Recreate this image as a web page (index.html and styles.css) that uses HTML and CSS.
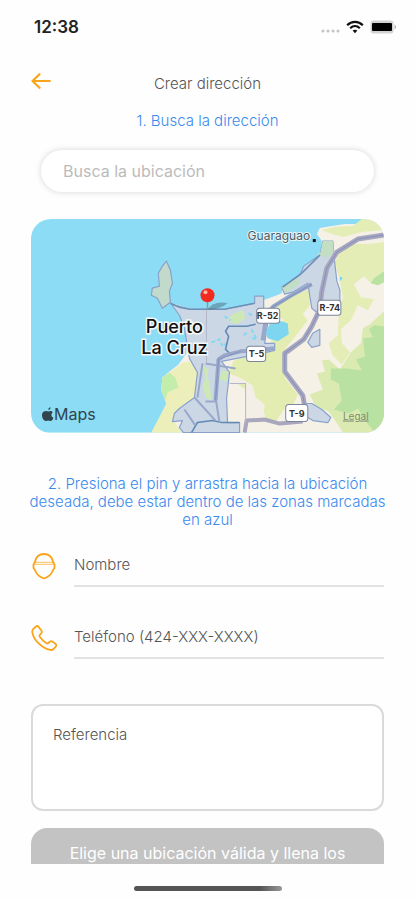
FILE: index.html
```
<!DOCTYPE html>
<html lang="es">
<head>
    <meta charset="UTF-8">
    <meta name="viewport" content="width=device-width, initial-scale=1.0">
    <title>Crear dirección</title>
    <link rel="stylesheet" href="styles.css">
</head>
<body>
    <div class="status-bar">
        <span class="time">12:38</span>
        <div class="status-icons">
            <svg width="19" height="4" viewBox="0 0 19 4" fill="#c4c4c4">
                <circle cx="2" cy="2" r="1.5"/><circle cx="7" cy="2" r="1.5"/><circle cx="12" cy="2" r="1.5"/><circle cx="17" cy="2" r="1.5"/>
            </svg>
            <svg width="18" height="14" viewBox="0 0 18 14" fill="none" stroke="#111" stroke-width="2.2">
                <path d="M1.2 5.2C5.6 0.7 12.4 0.7 16.8 5.2"/>
                <path d="M4.2 8.2C7 5.5 11 5.5 13.8 8.2"/>
                <path d="M9 13.2L6.6 10.6C8 9.4 10 9.4 11.4 10.6Z" fill="#111" stroke="none"/>
            </svg>
            <svg width="27" height="14" viewBox="0 0 27 14">
                <rect x="0.5" y="0.5" width="23" height="13" rx="3" fill="#d2d2d2"/>
                <rect x="2" y="3" width="20" height="8" rx="1" fill="#000"/>
                <path d="M24.5 4.5C26.6 5.3 26.6 8.7 24.5 9.5Z" fill="#bbb"/>
            </svg>
        </div>
    </div>

    <main class="screen">
        <header class="header">
            <button class="back" type="button" aria-label="Volver">
                <svg width="20" height="16" viewBox="0 0 20 16" fill="none" stroke="#faa41a" stroke-width="2.2" stroke-linecap="round" stroke-linejoin="round">
                    <path d="M18.8 8H1.5M8.5 1.2L1.5 8l7 6.8"/>
                </svg>
            </button>
            <h1>Crear dirección</h1>
        </header>

        <p class="hint">1. Busca la dirección</p>
        <input class="search" type="text" placeholder="Busca la ubicación" aria-label="Busca la ubicación">

        <div class="map">
            <svg viewBox="0 0 352 213" preserveAspectRatio="xMidYMid slice">
                <!-- sea and mainland -->
                <rect width="352" height="213" fill="#8bdcf4"/>
                <path d="M352 0H333L325 5L313 5L300 7L288 9L285 15L290 22L289 31L285 38L279 48L270 54L260 61L251 68L250 74L240 78L231 81L223 84L210 87L193 90L173 91L158 89L140 84L148 96L153 109L155 124L155 134L147 145L138 152L131 158L130 171L135 184L130 196L120 213H352Z" fill="#f5f1e6"/>

                <!-- fields and woods -->
                <path d="M330 0L321 7L303 8L290 11L300 15L311 18L330 13L352 11V0ZM310 29L323 25L336 25L352 23V55L340 65L332 57L322 65L329 78L342 80L336 91L326 86L319 101L309 110L310 124L318 133L310 145L301 136L297 124L306 116L307 91L311 78L307 58L303 43Z" fill="#e5edb6"/>
                <path d="M352 92L338 105L331 109L329 124L319 133L308 150L297 140L290 141L293 152L285 154L291 170L278 175L284 187L297 192L306 205L311 213H352Z" fill="#dbeab0"/>
                <path d="M352 107L342 106L337 110L341 118L331 119L333 137L324 140L330 151L315 149L299 149L299 160L307 164L310 181L302 190L317 194L326 189L336 205L343 213H352ZM352 52L342 59L339 64L346 66L352 63Z" fill="#b9e2a2"/>
                <path d="M245 85L281 68L280 75L278 86L271 95L276 101L263 118L253 130L253 158L266 175L262 184L252 190L245 201L235 201L231 190L224 192L219 174L204 163L198 152L202 141L226 134L238 128L241 115L252 100L240 96Z" fill="#e3edb2"/>
                <path d="M152 143L160 142L166 153L163 178L148 189L141 199L150 213H120L135 184L130 171L131 158Z" fill="#ecefb9"/>
                <path d="M198 164H214V203H231L233 185L224 178L221 166L208 158L200 155Z" fill="#f4efe6"/>
                <path d="M138 153L144 158L147 168L136 173L134 181L130 171L131 158Z" fill="#c3edab"/>

                <!-- delivery zones -->
                <g fill="#ccd7e6" stroke="#8aa2cb" stroke-width="1.2" stroke-linejoin="round">
                    <path d="M135 42L139 51L141 64L138 72L139 83L131 89L126 79L120 76L121 69L128 67L127 54L131 47Z" fill="#c2dacc"/>
                    <path d="M140 85L160 90L193 90L223 84V77H232V92L236 104L233 124H243V131L226 135L190 142L198 153L195 179L196 203H208V213H152L148 208L151 201L141 202L143 194L148 189L163 178L166 153L158 139L153 109L148 96Z"/>
                    <path d="M291 22H301L302 36L305 62L308 71V82L286 94L280 89L276 64L261 73L253 75L250 68L268 56L272 47L288 36Z"/>
                    <path d="M276 123L281 114L288 110V126L280 128Z"/>
                    <path d="M271 184L280 184L290 190L299 198L296 203L281 201L273 196Z"/>
                </g>
                <path d="M291 22H301L302 34L294 39L288 36ZM250 68L268 58L267 65L254 74Z" fill="#c2dfc3"/>
                <path d="M171 146L177 150L176 157L178 163L180 181L174 178L171 166L174 158ZM190 151L197 152L195 162L188 160ZM201 95L211 91L214 99L205 105L196 101Z" fill="#cde8b5"/>

                <!-- small water -->
                <path d="M239 103L243 96L246 101L256 104L257 115L246 122L236 119L234 113ZM308 57L311 59L308 62Z" fill="#7dd6f0"/>
                <path d="M180 123L188 120L191 127L195 124M193 97L199 101M217 94L222 97M220 110L225 120L218 118M212 116L216 113" fill="none" stroke="#86d8f0" stroke-width="2" stroke-dasharray="4 2"/>

                <!-- coast line and zone edges -->
                <path d="M139 84L148 88L158 90H193L223 84M288 36L270 54L251 68" fill="none" stroke="#6d90b6" stroke-width="1.6"/>
                <path d="M224 105L215 107H197L194 112L197 117L194 130L199 135M160 213L166 203L181 201L190 203H208" fill="none" stroke="#6289b4" stroke-width="1.6"/>

                <!-- roads -->
                <g fill="none" stroke="#a9a7be" stroke-linejoin="round">
                    <path d="M352 16L326 20L305 33L295 49L290 72L288 90L280 107L272 120L253 134L253 152L271 176L273 187" stroke-width="5"/>
                    <path d="M213 213L215 201L233 200L248 204L271 202" stroke-width="4"/>
                </g>
                <g fill="none" stroke="#99a7ca" stroke-linejoin="round">
                    <path d="M280 65L258 77L242 87L235 94L231 121M184 181L187 140L193 136L209 132L226 131L243 129" stroke-width="4"/>
                    <path d="M171 144L166 178M174 144L204 149M163 178L184 201M184 178L188 203M153 190L164 206M174 182L184 182" stroke-width="2"/>
                </g>
                <path d="M352 16L326 20L305 33L295 49L290 72L288 90L280 107L272 120L253 134L253 152L271 176L273 187M280 65L242 87L235 94M184 181L187 140L209 132" fill="none" stroke="#8093bd" stroke-width="1"/>
                <path d="M175 91V144M198 164H214V203" fill="none" stroke="#b4b7c9" stroke-width="1"/>

                <!-- road shields -->
                <g class="shield">
                    <rect x="225" y="89" width="23" height="15" rx="3"/>
                    <rect x="286" y="81" width="23" height="15" rx="3"/>
                    <rect x="215" y="127" width="19" height="15" rx="3"/>
                    <rect x="254" y="185" width="22" height="17" rx="3"/>
                    <text x="236" y="100">R-52</text>
                    <text x="298" y="92">R-74</text>
                    <text x="225" y="138">T-5</text>
                    <text x="265" y="197">T-9</text>
                </g>

                <!-- places -->
                <text class="village" x="216" y="21">Guaraguao</text>
                <rect x="281" y="20" width="3" height="3" fill="#111"/>
                <text class="city" x="143" y="114">Puerto</text>
                <text class="city" x="143" y="135">La Cruz</text>

                <!-- pin -->
                <path d="M176 90Q183 81 196 84Q187 91 176 90Z" fill="#45616d" fill-opacity="0.45"/>
                <path d="M176 82V90" stroke="#8e999d" stroke-width="1.5"/>
                <circle cx="176" cy="76" r="7" fill="#f32a20"/>
                <circle cx="174" cy="73" r="2" fill="#ffb5a7"/>

                <!-- maps mark -->
                <path d="M17.5 190.5C18.8 190.2 19.6 188.9 19.4 187.7C18 187.9 17 189.2 17.5 190.5ZM20.4 195.4C20.4 194 21.2 193.1 21.8 192.8C20.8 191.3 19.1 191.2 17.4 192C15.1 190.8 12.3 191.6 11.3 193.8C10 197.3 12.8 202 15.1 201.5C16.7 200.7 17.6 200.8 19.1 201.5C20.7 201.7 22 199.7 22.4 198.2C21.1 197.6 20.4 196.7 20.4 195.4Z" fill="#31444d"/>
                <text class="brand" x="23" y="200">Maps</text>
                <text class="legal" x="311" y="200">Legal</text>
            </svg>
        </div>

        <p class="hint hint-pin">2. Presiona el pin y arrastra hacia la ubicación deseada, debe estar dentro de las zonas marcadas en azul</p>

        <div class="field">
            <label for="nombre" aria-label="Nombre">
                <svg width="26" height="28" viewBox="0 0 26 28" fill="none" stroke="#faa41a" stroke-width="1.8" stroke-linejoin="round">
                    <path d="M4 9.8C5 4.6 8 2 13 2S21 4.6 22 9.8L23.5 12.5V16L21.8 18.5C20.5 22.5 17 25 13 26.5C9 25 5.5 22.5 4.2 18.5L2.5 16V12.5Z"/>
                    <path d="M3.5 10.3H22.5M3.5 12.3H22.5" stroke-width="1" stroke-opacity="0.7"/>
                </svg>
            </label>
            <input id="nombre" type="text" placeholder="Nombre">
        </div>

        <div class="field">
            <label for="telefono" aria-label="Teléfono">
                <svg width="26" height="28" viewBox="0 0 26 28" fill="none" stroke="#faa41a" stroke-width="1.8" stroke-linejoin="round">
                    <path d="M2.2 5.2L5 2.5Q6.5 1.4 7.7 2.9L10.5 6.8Q11.3 8.2 10.2 9.4L8.6 11.1Q8.3 12 9 13.1Q11.5 16.8 15.5 19.3Q16.5 19.8 17.4 19L18.8 17.7Q20 16.8 21.3 17.6L24.7 20.1Q26 21.4 24.8 22.7L22.6 25Q21.2 26.3 19.3 25.9C11.5 24.5 2.8 16.5 1.3 8.3Q1 6.5 2.2 5.2Z"/>
                </svg>
            </label>
            <input id="telefono" type="tel" placeholder="Teléfono (424-XXX-XXXX)">
        </div>

        <textarea class="reference" placeholder="Referencia" aria-label="Referencia"></textarea>
        <button class="submit" type="submit">Elige una ubicación válida y llena los</button>
    </main>

    <div class="home"><div class="home-bar"></div></div>
</body>
</html>
```
FILE: styles.css
```
* {
    box-sizing: border-box;
}
body {
    display: flex;
    flex-direction: column;
    height: 100vh;
    margin: 0;
    background-color: #fefefe;
    font-family: Inter, "Liberation Sans", sans-serif;
    font-size: 15px;
    font-weight: 300;
    color: #555;
}
button, input, textarea {
    font: inherit;
}
.status-bar {
    display: flex;
    flex: none;
    align-items: center;
    justify-content: space-between;
    height: 54px;
    padding: 0 18px 0 34px;
}
.time {
    font-size: 17px;
    font-weight: 600;
    color: #222;
}
.status-icons {
    display: flex;
    align-items: center;
    gap: 6px;
}
.status-icons svg:first-child {
    margin-top: 8px;
}
.screen {
    display: flex;
    flex: 1;
    flex-direction: column;
    min-height: 0;
    padding: 0 31px;
    overflow: hidden;
}
.screen > * {
    flex: none;
}
.header {
    display: grid;
    grid-template-columns: 24px 1fr 24px;
    align-items: center;
    height: 56px;
    padding-top: 3px;
}
.back {
    display: flex;
    padding: 0 0 6px;
    border: none;
    background: none;
    cursor: pointer;
}
h1 {
    margin: 0;
    font-size: 15px;
    font-weight: 300;
    line-height: 18px;
    text-align: center;
}
.hint {
    margin: 2px 0 20px;
    font-size: 15px;
    line-height: 18px;
    text-align: center;
    color: #3a8aee;
}
.hint-pin {
    margin: 42px -4px 16px;
}
.search {
    height: 42px;
    margin: 0 10px 27px;
    padding: 0 22px;
    border: none;
    border-radius: 21px;
    background-color: #fff;
    box-shadow: 0 0 6px rgba(0, 0, 0, 0.16);
    font-size: 16px;
    font-weight: 400;
}
.search::placeholder {
    color: #bbb;
}
.map {
    border-radius: 20px;
    overflow: hidden;
}
.map svg {
    display: block;
    width: 100%;
}
.shield rect {
    fill: #fff;
    stroke: #7c8599;
    stroke-width: 1px;
}
.shield text {
    font-size: 9px;
    font-weight: 700;
    text-anchor: middle;
    fill: #333;
}
.village {
    font-size: 12px;
    font-weight: 400;
    fill: #4c5c66;
    stroke: #e3f5fa;
    stroke-width: 2px;
    paint-order: stroke;
}
.city {
    font-size: 18px;
    font-weight: 500;
    text-anchor: middle;
    fill: #111;
    stroke: #f4f8f8;
    stroke-width: 3px;
    paint-order: stroke;
}
.brand {
    font-size: 16px;
    font-weight: 400;
    fill: #31444d;
}
.legal {
    font-size: 10px;
    font-weight: 400;
    fill: #7d8c75;
    text-decoration: underline;
}
.field {
    display: flex;
    align-items: center;
    gap: 17px;
    height: 42px;
    margin-bottom: 30px;
}
.field label {
    display: flex;
}
.field input {
    flex: 1;
    min-width: 0;
    height: 42px;
    padding: 0;
    border: none;
    border-bottom: 2px solid #e2e2e2;
    background: none;
    font-size: 15px;
}
.field input::placeholder,
.reference::placeholder {
    color: #555;
}
.reference {
    height: 107px;
    margin: 15px 0 17px;
    padding: 20px;
    border: 2px solid #dadada;
    border-radius: 12px;
    background-color: #fff;
    font-size: 15px;
    line-height: 18px;
    resize: none;
}
.submit {
    padding: 14px 32px;
    border: none;
    border-radius: 16px;
    background-color: #c3c3c3;
    font-size: 16px;
    font-weight: 400;
    line-height: 22px;
    color: #fff;
}
.home {
    display: flex;
    flex: none;
    justify-content: center;
    height: 36px;
    padding-top: 22px;
}
.home-bar {
    width: 148px;
    height: 5px;
    border-radius: 3px;
    background: linear-gradient(to right, #555, #555 85%, #999);
}
```
